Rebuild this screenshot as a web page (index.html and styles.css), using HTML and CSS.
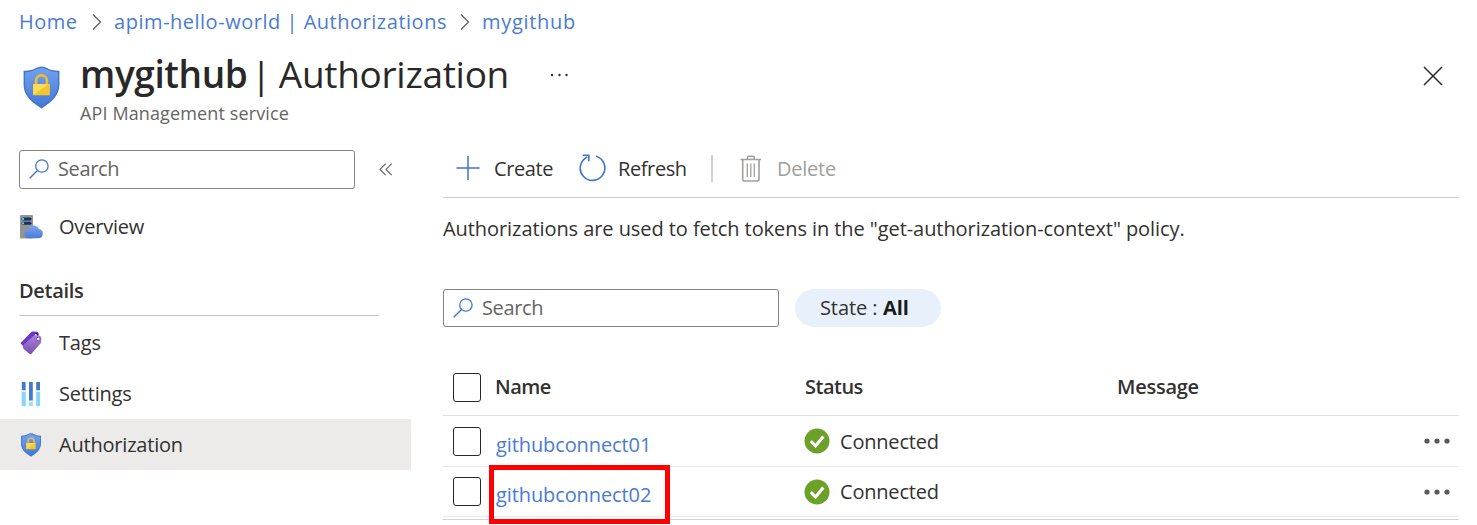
FILE: index.html
```html
<!DOCTYPE html>
<html lang="en">
<head>
<meta charset="utf-8">
<title>mygithub | Authorization</title>
<link rel="stylesheet" href="styles.css">
</head>
<body>
<svg class="defs" width="0" height="0" aria-hidden="true">
  <defs>
    <linearGradient id="shieldFill" x1="0" y1="0" x2="0" y2="1"><stop offset="0" stop-color="#73a1ec"/><stop offset="1" stop-color="#4478d4"/></linearGradient>
    <linearGradient id="tagFill" x1="0" y1="0" x2="0" y2="1"><stop offset="0" stop-color="#aa7fdc"/><stop offset="1" stop-color="#7952ad"/></linearGradient>
    <linearGradient id="cloudFill" x1="0" y1="0" x2="0" y2="1"><stop offset="0" stop-color="#7ba6ee"/><stop offset="1" stop-color="#4a7bd8"/></linearGradient>
  </defs>
  <symbol id="shield" viewBox="0 0 36 42">
    <path d="M18 .5C23 .5 25 5 35.500 4.600V18C35.500 29 28 35 18 41.500C8 35 .5 29 .5 18V4.600C11 5 13 .5 18 .5Z" fill="#4275cb"/>
    <path d="M18 2C22.500 2 25.500 6 34 6V18C34 28 27 34 18 39.800C9 34 2 28 2 18V6C10.500 6 13.500 2 18 2Z" fill="url(#shieldFill)"/>
    <path d="M12.700 18V14.500a5.300 5.300 0 0 1 10.600 0V18" fill="none" stroke="#efbd35" stroke-width="2.600"/>
    <rect x="9.700" y="17.500" width="16.500" height="11" rx=".6" fill="#f4c52d"/>
    <path d="M10 17.700H25.500L10 28Z" fill="#fbdc58"/>
  </symbol>
  <symbol id="search" viewBox="0 0 20 20">
    <circle cx="12.900" cy="7" r="6.200" fill="none" stroke="#3c76d6" stroke-width="1.300"/>
    <path d="M8.500 11.400L.7 19.200" stroke="#3c76d6" stroke-width="1.400"/>
  </symbol>
  <symbol id="check" viewBox="0 0 26 26">
    <circle cx="13" cy="13" r="12.500" fill="#6ba126"/>
    <path d="M6.800 13.200L11.500 18L19.300 8.400" fill="none" stroke="#fff" stroke-width="3.100"/>
  </symbol>
  <symbol id="dots" viewBox="0 0 26 6">
    <circle cx="3" cy="3" r="2.600"/><circle cx="13" cy="3" r="2.600"/><circle cx="23" cy="3" r="2.600"/>
  </symbol>
</svg>

<nav class="breadcrumb">
  <a class="t-home">Home</a>
  <svg class="chevron" viewBox="0 0 10 18"><path d="M1 1.500L8.500 9L1 16.500"/></svg>
  <a class="t-crumb">apim-hello-world | Authorizations</a>
  <svg class="chevron" viewBox="0 0 10 18"><path d="M1 1.500L8.500 9L1 16.500"/></svg>
  <a class="t-my">mygithub</a>
</nav>

<header class="header">
  <svg class="header-icon"><use href="#shield"/></svg>
  <div class="heading">
    <h1 class="title"><b class="t-title-name">mygithub</b><span class="t-title-rest">| Authorization</span></h1>
    <div class="subtitle"><span>API Management service</span></div>
  </div>
  <svg class="title-dots" viewBox="0 0 18 4"><circle cx="2" cy="2" r="1.200"/><circle cx="9.500" cy="2" r="1.200"/><circle cx="16.500" cy="2" r="1.200"/></svg>
  <svg class="close" viewBox="0 0 20 20"><path d="M1 1L19 19M19 1L1 19"/></svg>
</header>

<div class="body">
  <aside class="sidebar">
    <div class="side-search">
      <div class="search-box"><svg class="search-icon"><use href="#search"/></svg><span class="t-search">Search</span></div>
      <svg class="collapse" viewBox="0 0 14 13"><path d="M6.700 .6L1 6.400L6.700 12.200M12.700 .6L7 6.400L12.700 12.200"/></svg>
    </div>
    <div class="item overview">
      <svg class="item-icon" viewBox="0 0 24 24">
        <rect x="1" y="0" width="13" height="23.500" rx="1" fill="#949494"/>
        <rect x="2.500" y="2.400" width="10" height="3" rx="1.500" fill="#163064"/><rect x="2.500" y="6.800" width="10" height="3" rx="1.500" fill="#163064"/>
        <circle cx="4.100" cy="3.900" r="1.100" fill="#5cd5f2"/><circle cx="4.100" cy="8.300" r="1.100" fill="#5cd5f2"/>
        <path d="M9.500 23.300a4.500 4.500 0 0 1-.6-8.900A6 6 0 0 1 20 14a4.700 4.700 0 0 1-.7 9.300Z" fill="url(#cloudFill)"/>
      </svg>
      <span class="t-overview">Overview</span>
    </div>
    <h2 class="group"><span>Details</span></h2>
    <div class="item">
      <svg class="item-icon" viewBox="0 0 24 24">
        <path d="M1.500 12.300L12 1.200Q12.700.6 13.600.6L18 .7Q19.600.9 19.600 2.500V7L5 16.300Z" fill="#6c36cd"/>
        <circle cx="17.300" cy="3.700" r="1.800" fill="#35156c"/><circle cx="16.800" cy="4.200" r="1.100" fill="#fff"/>
        <path d="M4 14.300L15.300 4.300L20.500 4.800Q22.200 5.200 22.300 7L22.100 11.700L12.200 23Q11.300 23.500 10.600 22.900L4.200 17.500Z" fill="url(#tagFill)"/>
        <circle cx="19.300" cy="8" r="1.800" fill="#fff" stroke="#6942ad" stroke-width=".9"/>
      </svg>
      <span class="t-tags">Tags</span>
    </div>
    <div class="item">
      <svg class="item-icon settings-icon" viewBox="0 0 24 26">
        <path d="M4.700 10V25M19.100 10V25" stroke="#82d8f5" stroke-width="4"/><path d="M11.900 20V25" stroke="#8de3fb" stroke-width="4"/>
        <path d="M4.700 1V9.500M11.900 1V20M19.100 1V9.500" stroke="#4179ce" stroke-width="3.800"/>
        <path d="M2 10.200H7.400M16.400 10.200H21.800M9.200 20.400H14.600" stroke="#edf3f6" stroke-width="1.600"/>
      </svg>
      <span class="t-settings">Settings</span>
    </div>
    <div class="item selected">
      <svg class="item-icon shield-small"><use href="#shield"/></svg>
      <span class="t-auth">Authorization</span>
    </div>
  </aside>

  <main class="main">
    <div class="toolbar">
      <svg class="plus" viewBox="0 0 24 26"><path d="M.5 13H23.500M12 1V25"/></svg>
      <span class="t-create">Create</span>
      <svg class="refresh" viewBox="0 0 27 28"><path d="M17 2.300A12.300 12.300 0 1 1 8.300 3M3.800 1.300H9.800V7.300"/></svg>
      <span class="t-refresh">Refresh</span>
      <i class="divider"></i>
      <svg class="trash" viewBox="0 0 22 27"><path d="M.5 4.500H21M2.700 4.500V24.500Q2.700 26 4.200 26H17.500Q19 26 19 24.500V4.500M7.500 4V2.500Q7.500 1.200 8.800 1.200H12.900Q14.200 1.200 14.200 2.500V4"/><path class="thin" d="M7.300 8.500V22M10.800 8.500V22M14.300 8.500V22"/></svg>
      <span class="t-delete">Delete</span>
    </div>
    <p class="description"><span>Authorizations are used to fetch tokens in the "get-authorization-context" policy.</span></p>
    <div class="filters">
      <div class="search-box"><svg class="search-icon"><use href="#search"/></svg><span class="t-search">Search</span></div>
      <div class="pill"><span class="t-state">State :</span><b class="t-all">All</b></div>
    </div>
    <div class="table">
      <div class="row head">
        <i class="checkbox"></i><span class="t-name">Name</span><span class="t-status">Status</span><span class="t-message">Message</span>
      </div>
      <div class="row">
        <i class="checkbox"></i><span class="link first-link"><a>githubconnect01</a></span>
        <span class="state"><svg class="ok"><use href="#check"/></svg><span class="t-connected">Connected</span></span>
        <svg class="more"><use href="#dots"/></svg>
      </div>
      <div class="row last">
        <i class="checkbox"></i><span class="link"><a>githubconnect02</a><i class="highlight"></i></span>
        <span class="state"><svg class="ok"><use href="#check"/></svg><span class="t-connected">Connected</span></span>
        <svg class="more"><use href="#dots"/></svg>
      </div>
    </div>
  </main>
</div>
</body>
</html>
```
FILE: styles.css
```css
* { box-sizing: border-box; }
html, body { margin: 0; height: 525px; overflow: hidden; }
body { background: #fff; color: #323130; font: 20px/28px "Open Sans", "Noto Sans", sans-serif; letter-spacing: -0.3px; }
svg { display: block; flex: none; fill: none; }
.defs { position: absolute; }
span, a, b { white-space: nowrap; }

.breadcrumb { display: flex; align-items: center; height: 43px; padding-left: 19px; color: #4a7bd3; letter-spacing: 0.52px; }
.chevron { width: 10px; height: 18px; stroke: #605e5c; stroke-width: 1.2; }
.t-home { width: 73px; }
.t-crumb { width: 346px; margin-left: 12px; }
.t-my { margin-left: 12px; letter-spacing: 0.7px; }

.header { display: flex; height: 107px; padding: 0 33px 0 23px; }
.header-icon { width: 37px; height: 43px; margin-top: 23px; }
.heading { width: 429px; margin-left: 20px; }
.title { display: flex; height: 59px; margin: 0; padding-top: 1px; font-size: 37px; line-height: 60px; font-weight: 400; letter-spacing: -0.4px; color: #292827; }
.t-title-name { width: 176px; font-weight: 600; }
.t-title-rest { word-spacing: -1.5px; letter-spacing: -0.3px; }
.subtitle { height: 22px; font-size: 18px; line-height: 22px; letter-spacing: 0.12px; color: #666462; }
.title-dots { width: 18px; height: 4px; margin: 30px 0 0 41px; fill: #323130; }
.close { width: 20px; height: 20px; margin: 23px 1px 0 auto; stroke: #292827; stroke-width: 1.5; }

.body { display: flex; height: 375px; }
.sidebar { width: 411px; letter-spacing: -0.2px; }
.side-search { display: flex; align-items: center; gap: 24px; height: 39px; padding-left: 19px; }
.search-box { display: flex; align-items: center; width: 336px; height: 39px; padding: 0 0 1px 9px; border: 1px solid #858381; border-radius: 3px; color: #666462; letter-spacing: -0.35px; }
.search-icon { width: 20px; height: 20px; margin-right: 9px; }
.collapse { width: 14px; height: 13px; stroke: #605e5c; stroke-width: 1.1; }
.item { display: flex; align-items: center; gap: 16px; height: 51px; padding-left: 19px; }
.item-icon { width: 24px; height: 24px; }
.settings-icon { height: 26px; }
.overview { margin-top: 12px; }
.group { height: 64px; margin: 0 32px 1px 19px; padding-top: 25px; border-bottom: 1px solid #c8c6c4; font-size: 20px; line-height: 28px; font-weight: 600; letter-spacing: -0.3px; }
.selected { background: #ecebea; }

.main { width: 1016px; margin-left: 32px; }
.toolbar { display: flex; align-items: center; height: 48px; padding: 0 0 11px 13px; border-bottom: 1px solid #d2d0ce; letter-spacing: -0.4px; }
.toolbar span { padding-top: 1px; }
.plus { width: 24px; height: 26px; stroke: #3c76d6; stroke-width: 1.5; }
.t-create { width: 84px; margin-left: 14px; }
.refresh { width: 27px; height: 28px; margin-left: 1px; stroke: #3c76d6; stroke-width: 1.6; }
.t-refresh { width: 93px; margin-left: 12px; }
.divider { width: 2px; height: 27px; background: #d2d0ce; }
.trash { width: 22px; height: 27px; margin-left: 27px; stroke: #a19f9d; stroke-width: 1.6; }
.thin { stroke-width: 1.3; }
.t-delete { margin-left: 15px; color: #a19f9d; letter-spacing: -0.25px; }
.description { height: 60px; margin: 0 0 31px; line-height: 62px; letter-spacing: -0.07px; }
.filters { display: flex; height: 38px; gap: 16px; }
.filters .search-box { height: 38px; padding-bottom: 0; }
.pill { display: flex; align-items: center; width: 146px; height: 38px; padding-left: 25px; border-radius: 19px; background: #e8f1fb; color: #323130; letter-spacing: -0.1px; }
.t-state { width: 63px; }
.t-all { color: #1b1a19; font-weight: 700; }
.table { height: 193px; padding-top: 32px; border-bottom: 1px solid #d5d3d1; }
.row { display: grid; grid-template-columns: 42px 310px 312px 1fr; align-items: center; height: 51px; padding: 0 9px 0 10px; border-bottom: 1px solid #edebe9; }
.head { height: 57px; border-color: #e1dfdd; font-weight: 600; letter-spacing: -0.5px; }
.t-message { letter-spacing: -0.25px; }
.last { height: 50px; }
.checkbox { width: 28px; height: 29px; border: 1.500px solid #292827; border-radius: 3px; }
.link { position: relative; color: #4a7bd3; padding: 6px 0 0 1px; letter-spacing: -0.1px; }
.first-link { padding-top: 8px; }
.highlight { position: absolute; left: -6px; top: -10px; width: 181px; height: 59px; border: 5px solid #f00; }
.state { display: flex; align-items: center; gap: 10px; margin-left: -1px; letter-spacing: -0.2px; }
.ok { width: 26px; height: 26px; }
.t-connected { padding-top: 1px; }
.more { width: 26px; height: 6px; justify-self: end; fill: #5c5a58; }
```
